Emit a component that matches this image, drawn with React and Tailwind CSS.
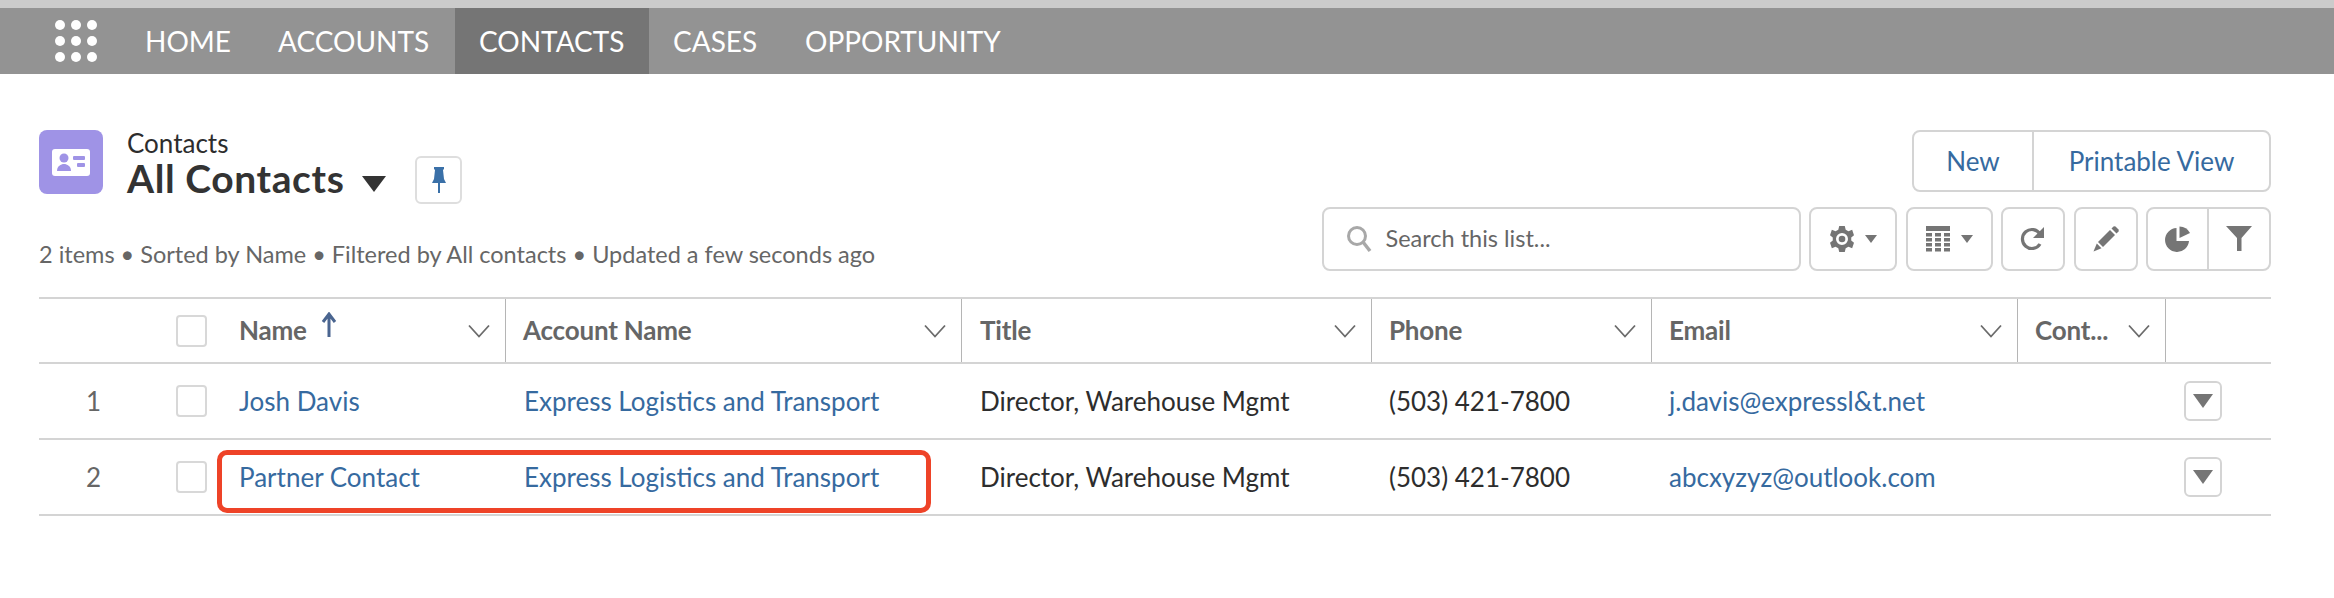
const L = "[font-family:Lato,'Noto_Sans',sans-serif]";

function Chevron() {
  return (
    <svg width="22" height="14" viewBox="0 0 22 14" className="shrink-0">
      <path d="M1 1.5 L11 12.5 L21 1.5" fill="none" stroke="#6b6b6b" strokeWidth="1.8" />
    </svg>
  );
}

function HeadCell({ label, sorted, pl = "pl-[17px]" }) {
  return (
    <div className={`flex items-center justify-between ${pl} pr-[15px] h-full border-r border-[#b5b5b5]`}>
      <span className="flex items-center text-[26px] font-bold text-[#666666] tracking-[-0.2px]">
        {label}
        {sorted && (
          <svg width="18" height="28" viewBox="0 0 18 28" className="ml-[13px] -mt-[9px]">
            <path d="M9 25 V3 M3 10 L9 2 L15 10" fill="none" stroke="#4a6590" strokeWidth="3" />
          </svg>
        )}
      </span>
      <Chevron />
    </div>
  );
}

function CheckBox() {
  return <div className="w-[31px] h-[32px] rounded-[4px] border-2 border-[#d8d8d8] bg-white shrink-0" />;
}

function RowAction() {
  return (
    <div className="w-[38px] h-[40px] rounded-[6px] border-2 border-[#d4d4d4] bg-white flex items-center justify-center">
      <svg width="20" height="14" viewBox="0 0 20 14"><path d="M0 0 H20 L10 14 Z" fill="#757575" /></svg>
    </div>
  );
}

const rowGrid = "grid grid-cols-[185px_282px_456px_410px_280px_366px_148px_105px]";

function Row({ n, name, email }) {
  return (
    <div className={`${rowGrid} h-[76px] border-b-2 border-[#d4d4d4] items-center text-[26px]`}>
      <div className="flex items-center">
        <span className="w-[137px] pr-[75px] text-right text-[#666666]">{n}</span>
        <CheckBox />
      </div>
      <a className="pl-[15px] text-[#366a9f]">{name}</a>
      <a className="pl-[18px] text-[#366a9f]">Express Logistics and Transport</a>
      <span className="pl-[18px] text-[#2d2d2d]">Director, Warehouse Mgmt</span>
      <span className="pl-[17px] text-[#2d2d2d]">(503) 421-7800</span>
      <a className="pl-[17px] text-[#366a9f]">{email}</a>
      <span />
      <div className="pl-[18px]"><RowAction /></div>
    </div>
  );
}

function ToolBtn({ w, children, className = "" }) {
  return (
    <div className={`${w} h-[64px] flex items-center justify-center gap-[11px] rounded-[8px] border-2 border-[#d4d4d4] bg-white ${className}`}>
      {children}
    </div>
  );
}

function Caret() {
  return <svg width="12" height="8" viewBox="0 0 12 8"><path d="M0 0 H12 L6 8 Z" fill="#757575" /></svg>;
}

export default function App() {
  return (
    <div className={`w-[2334px] h-[598px] bg-white ${L} overflow-hidden relative`}>
      <div className="h-[8px] bg-[#cbcbcb]" />
      <nav className="h-[66px] bg-[#939393] flex items-stretch text-white text-[28px]">
        <div className="w-[145px] flex items-center pl-[55px]">
          <div className="grid grid-cols-3 gap-x-[6px] gap-y-[6px]">
            {[0,1,2,3,4,5,6,7,8].map((i) => <span key={i} className="w-[10px] h-[10px] rounded-full bg-white" />)}
          </div>
        </div>
        <span className="flex items-center w-[133px]">HOME</span>
        <span className="flex items-center w-[177px]">ACCOUNTS</span>
        <span className="flex items-center w-[194px] pl-[24px] bg-[#757575]">CONTACTS</span>
        <span className="flex items-center w-[156px] pl-[24px]">CASES</span>
        <span className="flex items-center">OPPORTUNITY</span>
      </nav>

      <div className="pl-[39px] pr-[63px] pt-[56px] flex justify-between h-[223px]">
        <div className="flex flex-col">
          <div className="flex items-start">
            <div className="w-[64px] h-[64px] rounded-[8px] bg-[#9f93e6] flex items-center justify-center">
              <svg width="38" height="27" viewBox="0 0 38 27">
                <rect width="38" height="27" rx="3" fill="#fff" />
                <circle cx="12" cy="9" r="4.5" fill="#9f93e6" />
                <path d="M5 22 C5 17 9 15 12 15 C15 15 19 17 19 22 Z" fill="#9f93e6" />
                <rect x="21" y="7" width="12" height="4" rx="1" fill="#9f93e6" />
                <rect x="25" y="14" width="8" height="4" rx="1" fill="#9f93e6" />
              </svg>
            </div>
            <div className="ml-[24px] -mt-[2px]">
              <div className="text-[26px] leading-[30px] text-[#2d2d2d]">Contacts</div>
              <div className="flex items-start">
                <span className="text-[39px] leading-[40px] font-bold text-[#333333] tracking-[0.6px]">All Contacts</span>
                <svg width="24" height="16" viewBox="0 0 24 16" className="ml-[18px] mt-[18px]"><path d="M0 0 H24 L12 16 Z" fill="#333333" /></svg>
                <div className="ml-[29px] -mt-[2px] w-[47px] h-[48px] rounded-[6px] border-2 border-[#dedede] flex items-center justify-center">
                  <svg width="14" height="26" viewBox="0 0 14 26">
                    <path d="M2 0 H12 V2 L11 3 L12 12 L14 16 H8 V26 H6 V16 H0 L2 12 L3 3 L2 2 Z" fill="#3a70a8" />
                  </svg>
                </div>
              </div>
            </div>
          </div>
          <div className="mt-[33px] text-[23.5px] text-[#666666]">2 items • Sorted by Name • Filtered by All contacts • Updated a few seconds ago</div>
        </div>

        <div className="flex flex-col items-end gap-[15px]">
          <div className="flex h-[62px] rounded-[8px] border-2 border-[#d4d4d4] text-[26px] text-[#366a9f]">
            <span className="w-[120px] flex items-center justify-center border-r-2 border-[#d4d4d4]">New</span>
            <span className="w-[235px] flex items-center justify-center">Printable View</span>
          </div>
          <div className="flex gap-[8.5px]">
            <div className="w-[479px] h-[64px] rounded-[8px] border-2 border-[#d4d4d4] flex items-center pl-[22px] text-[23.5px] text-[#666666]">
              <svg width="26" height="28" viewBox="0 0 26 28" className="mr-[14px]">
                <circle cx="11" cy="11" r="8.5" fill="none" stroke="#a8a8a8" strokeWidth="3" />
                <path d="M17 17 L24 26" stroke="#a8a8a8" strokeWidth="3.5" />
              </svg>
              Search this list...
            </div>
            <ToolBtn w="w-[88px]">
              <svg width="24" height="26" viewBox="0 0 26 28">
                <path fillRule="evenodd" fill="#757575" d="M10 0 H16 L17 4 L20 5.5 L24 4 L26 10 L23 12.5 V15.5 L26 18 L24 24 L20 22.5 L17 24 L16 28 H10 L9 24 L6 22.5 L2 24 L0 18 L3 15.5 V12.5 L0 10 L2 4 L6 5.5 L9 4 Z M13 7.5 A6.5 6.5 0 1 0 13 20.5 A6.5 6.5 0 1 0 13 7.5 Z" />
                <circle cx="13" cy="14" r="3.6" fill="#757575" />
              </svg>
              <Caret />
            </ToolBtn>
            <ToolBtn w="w-[87px]">
              <svg width="24" height="26" viewBox="0 0 24 26" fill="#757575">
                <rect width="24" height="5" />
                {[7,12,17,22].map((y) => [0,9,18].map((x) => <rect key={`${x}-${y}`} x={x} y={y} width="6" height="3.5" />))}
              </svg>
              <Caret />
            </ToolBtn>
            <ToolBtn w="w-[64px]">
              <svg width="26" height="26" viewBox="0 0 26 26">
                <path d="M20 18 A9.5 9.5 0 1 1 20 8" fill="none" stroke="#757575" strokeWidth="3.2" />
                <path d="M24 1 V12 H13 Z" fill="#757575" />
              </svg>
            </ToolBtn>
            <ToolBtn w="w-[64px]">
              <svg width="26" height="26" viewBox="0 0 26 26" fill="#757575">
                <path d="M5 16 L17 4 L22 9 L10 21 Z" />
                <path d="M18.5 2.5 L20.5 0.5 Q21.5 0 22.5 0.5 L25.5 3.5 Q26 4.5 25.5 5.5 L23.5 7.5 Z" />
                <path d="M3.8 17.5 L8.5 22.2 L0.5 25.5 Z" />
              </svg>
            </ToolBtn>
            <div className="w-[125px] h-[64px] flex rounded-[8px] border-2 border-[#d4d4d4]">
              <span className="w-[61px] flex items-center justify-center border-r-2 border-[#d4d4d4]">
                <svg width="26" height="26" viewBox="0 0 26 26" fill="#757575">
                  <path d="M11.5 2 A12 12 0 1 0 24 15 H11.5 Z" />
                  <path d="M14.5 0.5 A12 12 0 0 1 25 7 L14.5 12 Z" />
                </svg>
              </span>
              <span className="flex-1 flex items-center justify-center">
                <svg width="26" height="26" viewBox="0 0 26 26" fill="#757575">
                  <path d="M0 0 H26 L15.5 12 V25 H11 V12 Z" />
                </svg>
              </span>
            </div>
          </div>
        </div>
      </div>

      <div className="mx-[39px] w-[2232px] border-t-2 border-[#d4d4d4] relative">
        <div className={`${rowGrid} h-[65px] border-b-2 border-[#d4d4d4] items-stretch`}>
          <div className="flex items-center pl-[137px]"><CheckBox /></div>
          <HeadCell label="Name" sorted pl="pl-[15px]" />
          <HeadCell label="Account Name" />
          <HeadCell label="Title" pl="pl-[18px]" />
          <HeadCell label="Phone" />
          <HeadCell label="Email" />
          <HeadCell label="Cont..." />
          <span />
        </div>
        <Row n="1" name="Josh Davis" email="j.davis@expressl&t.net" />
        <Row n="2" name="Partner Contact" email="abcxyzyz@outlook.com" />
        <div className="absolute left-[178px] top-[151px] w-[714px] h-[63px] rounded-[10px] border-[5px] border-[#ee4328]" />
      </div>
    </div>
  );
}
